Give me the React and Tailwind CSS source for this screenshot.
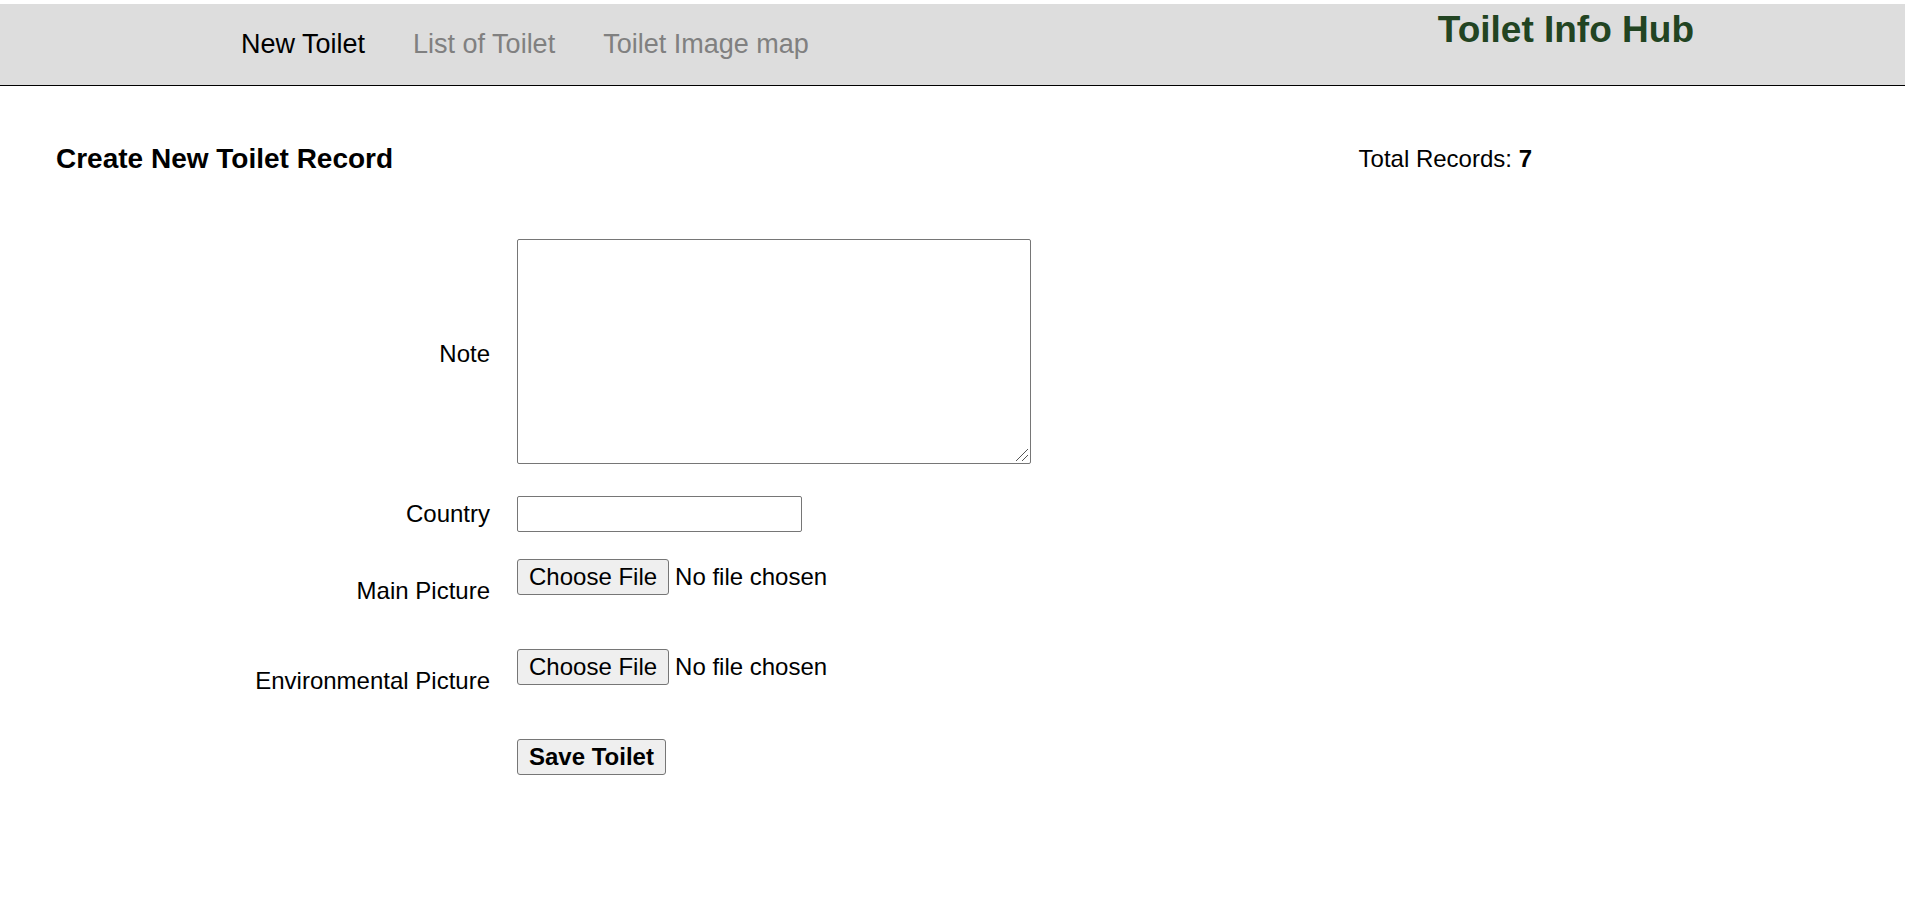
const fieldClass = "rounded-[2px] border border-[#767676] bg-white px-1";
const fileClass =
  "block h-9 w-[360px] leading-[34px] file:mr-[6px] file:h-9 file:rounded-[3px] file:border file:border-solid file:border-[#767676] file:bg-[#efefef] file:px-[11px] file:text-black";

function Row({ id, label, children }) {
  return (
    <div className="flex items-center gap-[27px]">
      <label htmlFor={id} className="w-[490px] shrink-0 text-right">
        {label}
      </label>
      {children}
    </div>
  );
}

export default function App() {
  return (
    <div className="bg-white pt-1 font-['Liberation_Sans',Arial,sans-serif] text-[24px] leading-9 text-black">
      <header className="mr-px flex min-h-[82px] items-start justify-between border-b border-black bg-[#dddddd] pr-[211px] pl-[241px]">
        <nav className="flex gap-12 pt-[25px] text-[27px] leading-[30px] text-[#808080]">
          <a href="#new" className="text-black">New Toilet</a>
          <a href="#list">List of Toilet</a>
          <a href="#map">Toilet Image map</a>
        </nav>
        <div className="pt-1 text-[37px] leading-[44px] font-bold text-[#224422]">Toilet Info Hub</div>
      </header>
      <main>
        <div className="flex items-center justify-between pt-[55px] pr-[374px] pl-14">
          <h1 className="text-[28px] leading-9 font-bold">Create New Toilet Record</h1>
          <p>
            Total Records: <strong>7</strong>
          </p>
        </div>
        <form className="flex flex-col gap-[27px] pt-[62px]" onSubmit={(e) => e.preventDefault()}>
          <Row id="note" label="Note">
            <div className="pb-[5px]">
              <div className="relative w-fit">
                <textarea
                  id="note"
                  className={`block h-[225px] w-[514px] resize [&::-webkit-resizer]:bg-transparent ${fieldClass}`}
                />
                <svg
                  aria-hidden="true"
                  className="pointer-events-none absolute right-[3px] bottom-[3px] size-3"
                  viewBox="0 0 12 12"
                  fill="none"
                  stroke="#555555"
                >
                  <path d="M0 12L12 0M6 12L12 6" />
                </svg>
              </div>
            </div>
          </Row>
          <Row id="country" label="Country">
            <input id="country" type="text" className={`h-9 w-[285px] ${fieldClass}`} />
          </Row>
          <Row id="main-picture" label="Main Picture">
            <div className="pb-[27px]">
              <input id="main-picture" type="file" className={fileClass} />
            </div>
          </Row>
          <Row id="env-picture" label="Environmental Picture">
            <div className="pb-[27px]">
              <input id="env-picture" type="file" className={fileClass} />
            </div>
          </Row>
          <div className="pl-[517px]">
            <button
              type="submit"
              className="block h-9 rounded-[3px] border border-[#767676] bg-[#efefef] px-[11px] leading-[34px] font-bold"
            >
              Save Toilet
            </button>
          </div>
        </form>
      </main>
    </div>
  );
}
